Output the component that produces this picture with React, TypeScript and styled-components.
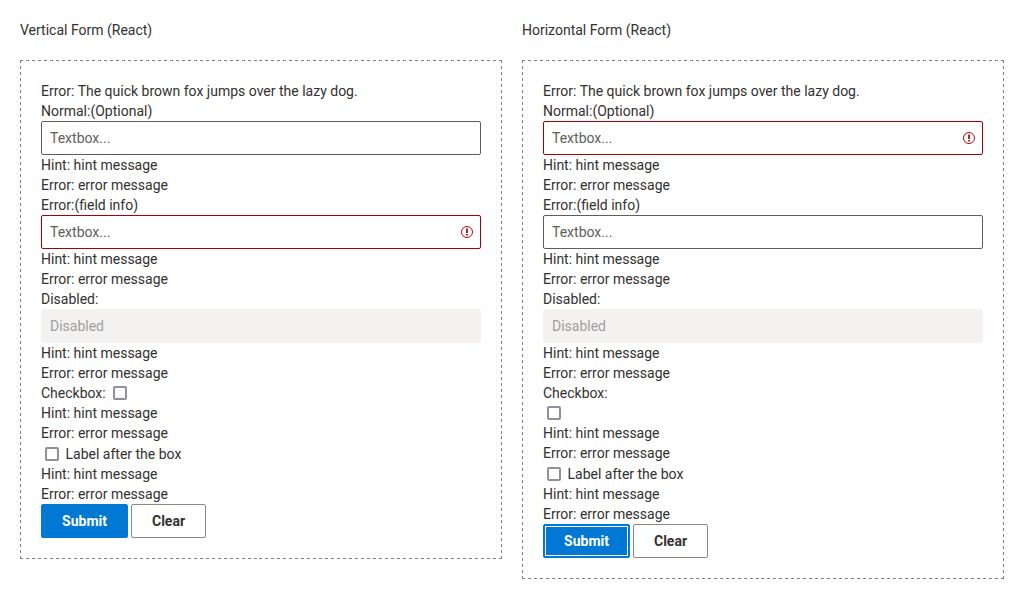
import React from "react";
import styled, { createGlobalStyle } from "styled-components";

const GlobalStyle = createGlobalStyle`
  * { box-sizing: border-box; }
  body {
    margin: 0;
    background: #fff;
    color: #323130;
    font-family: Roboto, "Liberation Sans", sans-serif;
    font-size: 14px;
    line-height: 20px;
    -webkit-font-smoothing: antialiased;
  }
`;

const Page = styled.main`
  display: flex;
  align-items: flex-start;
  gap: 20px;
  padding: 20px;
`;

const Column = styled.section`
  width: 482px;
`;

const Title = styled.div`
  margin-bottom: 20px;
`;

/* Dashed frame with even 3px dashes; every side starts and ends on a dash. */
const FormPanel = styled.form<{ $sideDashes: number }>`
  --across: repeating-linear-gradient(to right, #808080 0 3px, transparent 3px calc((100% - 3px) / 80));
  --down: repeating-linear-gradient(
    to bottom,
    #808080 0 3px,
    transparent 3px calc((100% - 3px) / ${(p) => p.$sideDashes})
  );
  padding: 21px;
  background-image: var(--across), var(--across), var(--down), var(--down);
  background-position: left top, left bottom, left top, right top;
  background-size: 100% 1px, 100% 1px, 1px 100%, 1px 100%;
  background-repeat: no-repeat;
`;

const Line = styled.div`
  height: 20px;
  white-space: nowrap;
`;

const InputBox = styled.div<{ $invalid?: boolean; $disabled?: boolean }>`
  display: flex;
  align-items: center;
  height: 34px;
  padding: 0 7px 0 8px;
  border: 1px solid
    ${(p) => (p.$disabled ? "#f3f2f1" : p.$invalid ? "#a80000" : "#605e5c")};
  border-radius: 2px;
  background: ${(p) => (p.$disabled ? "#f3f2f1" : "#fff")};
`;

const Input = styled.input`
  flex: 1;
  min-width: 0;
  padding: 0;
  border: 0;
  outline: 0;
  background: transparent;
  font: inherit;
  color: #323130;
  &::placeholder { color: #605e5c; opacity: 1; }
  &:disabled::placeholder { color: #a19f9d; }
`;

const CheckLine = styled.div<{ $tall?: boolean }>`
  display: flex;
  align-items: center;
  height: ${(p) => (p.$tall ? 21 : 20)}px;
  padding-top: ${(p) => (p.$tall ? 1 : 0)}px;
`;

const Checkbox = styled.input.attrs({ type: "checkbox" })<{ $afterLabel?: boolean }>`
  appearance: none;
  width: 14px;
  height: 14px;
  margin: 0 6.5px 0 ${(p) => (p.$afterLabel ? 7.4 : 4)}px;
  border: 2px solid #8f8f9d;
  border-radius: 2px;
  background: #fff;
`;

const Actions = styled.div`
  display: flex;
  gap: 3px;
  height: 34px;
`;

const Button = styled.button<{ $primary?: boolean; $focused?: boolean }>`
  width: ${(p) => (p.$primary ? 87 : 75)}px;
  height: 34px;
  padding: 0;
  border: 1px solid ${(p) => (p.$primary ? "#0078d4" : "#8a8886")};
  border-radius: 2px;
  background: ${(p) => (p.$primary ? "#0078d4" : "#fff")};
  color: ${(p) => (p.$primary ? "#fff" : "#323130")};
  font: 700 14px/20px Roboto, "Liberation Sans", sans-serif;
  outline: ${(p) => (p.$focused ? "1px solid #fff" : "none")};
  outline-offset: -3px;
`;

const ErrorIcon = () => (
  <svg width="12" height="12" viewBox="0 0 12 12" fill="none" stroke="#a80000">
    <circle cx="6" cy="6" r="5.5" strokeWidth="0.95" />
    <path d="M6 2.6V7M6 8V9.4" strokeWidth="1.7" />
  </svg>
);

const Messages = () => (
  <>
    <Line>Hint: hint message</Line>
    <Line>Error: error message</Line>
  </>
);

interface TextFieldProps {
  label: string;
  placeholder: string;
  invalid?: boolean;
  disabled?: boolean;
}

const TextField = ({ label, placeholder, invalid, disabled }: TextFieldProps) => (
  <>
    <Line>{label}</Line>
    <InputBox $invalid={invalid} $disabled={disabled}>
      <Input placeholder={placeholder} disabled={disabled} />
      {invalid && <ErrorIcon />}
    </InputBox>
    <Messages />
  </>
);

const DemoForm = ({ title, horizontal }: { title: string; horizontal?: boolean }) => (
  <Column>
    <Title>{title}</Title>
    <FormPanel $sideDashes={horizontal ? 86 : 83}>
      <Line>Error: The quick brown fox jumps over the lazy dog.</Line>
      <TextField label="Normal:(Optional)" placeholder="Textbox..." invalid={horizontal} />
      <TextField label="Error:(field info)" placeholder="Textbox..." invalid={!horizontal} />
      <TextField label="Disabled:" placeholder="Disabled" disabled />
      {horizontal ? (
        <>
          <Line>Checkbox:</Line>
          <CheckLine><Checkbox /></CheckLine>
        </>
      ) : (
        <CheckLine>Checkbox:<Checkbox $afterLabel /></CheckLine>
      )}
      <Messages />
      <CheckLine $tall><Checkbox />Label after the box</CheckLine>
      <Messages />
      <Actions>
        <Button type="button" $primary $focused={horizontal}>Submit</Button>
        <Button type="button">Clear</Button>
      </Actions>
    </FormPanel>
  </Column>
);

export default function App() {
  return (
    <>
      <GlobalStyle />
      <Page>
        <DemoForm title="Vertical Form (React)" />
        <DemoForm title="Horizontal Form (React)" horizontal />
      </Page>
    </>
  );
}
